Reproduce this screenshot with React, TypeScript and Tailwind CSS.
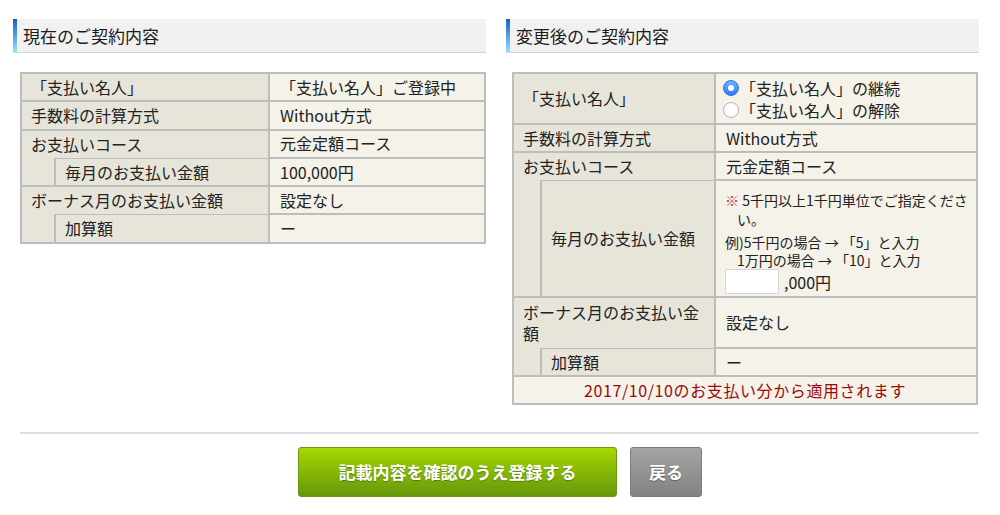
const font = { fontFamily: '"Noto Sans CJK JP", "Noto Sans", sans-serif' }

const th = 'bg-[#e7e4d9] border border-[#bdbdbd] pl-[9px] pr-[6px] flex items-center leading-[21px]'
const td = 'bg-[#f4f2e9] border border-[#bdbdbd] px-[10px] flex items-center leading-[21px]'
const indent = 'bg-[#e7e4d9] border border-[#bdbdbd] border-t-0'

function Heading({ title }: { title: string }) {
  return (
    <div className="flex h-[34px] bg-[#f1f1f1] border-b border-[#d3d3d3]">
      <div className="w-[4px] bg-linear-to-b from-[#1b5cc2] to-[#92e4f9]" />
      <div className="pl-[6px] flex items-center text-[17px] text-[#1a1a1a] font-normal">{title}</div>
    </div>
  )
}

function Radio({ checked, label }: { checked: boolean; label: string }) {
  return (
    <div className="flex items-center h-[22px] leading-[22px]">
      {checked ? (
        <span className="w-[16px] h-[16px] rounded-full bg-linear-to-b from-[#6cb0fb] to-[#2f7df6] border border-[#2a73e0] flex items-center justify-center">
          <span className="w-[6px] h-[6px] rounded-full bg-white" />
        </span>
      ) : (
        <span className="w-[16px] h-[16px] rounded-full bg-white border border-[#b3b3b3]" />
      )}
      <span className="ml-[1px]">{label}</span>
    </div>
  )
}

function CurrentTable() {
  return (
    <div className="ml-[7px] w-[466px] grid grid-cols-[34px_214px_1fr] grid-rows-[repeat(6,28.3px)] border border-[#bdbdbd]">
      <div className={`${th} col-span-2`}>「支払い名人」</div>
      <div className={td}>「支払い名人」ご登録中</div>
      <div className={`${th} col-span-2`}>手数料の計算方式</div>
      <div className={td}>Without方式</div>
      <div className={`${th} col-span-2 border-b-0`}>お支払いコース</div>
      <div className={td}>元金定額コース</div>
      <div className={indent} />
      <div className={th}>毎月のお支払い金額</div>
      <div className={td}>100,000円</div>
      <div className={`${th} col-span-2 border-b-0`}>ボーナス月のお支払い金額</div>
      <div className={td}>設定なし</div>
      <div className={indent} />
      <div className={th}>加算額</div>
      <div className={td}>ー</div>
    </div>
  )
}

function NewTable() {
  return (
    <div className="ml-[6px] w-[466px] grid grid-cols-[28px_174px_1fr] grid-rows-[51px_28px_28px_117px_51px_28px_28px] border border-[#bdbdbd]">
      <div className={`${th} col-span-2`}>「支払い名人」</div>
      <div className="bg-[#f4f2e9] border border-[#bdbdbd] pl-[7px] flex flex-col justify-center">
        <Radio checked label="「支払い名人」の継続" />
        <Radio checked={false} label="「支払い名人」の解除" />
      </div>
      <div className={`${th} col-span-2`}>手数料の計算方式</div>
      <div className={td}>Without方式</div>
      <div className={`${th} col-span-2 border-b-0`}>お支払いコース</div>
      <div className={td}>元金定額コース</div>
      <div className={indent} />
      <div className={th}>毎月のお支払い金額</div>
      <div className="bg-[#f4f2e9] border border-[#bdbdbd] pl-[9px] pr-[4px] pt-[10px] flex flex-col">
        <div className="text-[14px] leading-[19px] pl-[12px] -indent-[12px]">
          <span className="text-[#cc3333]">※</span> 5千円以上1千円単位でご指定ください。
        </div>
        <div className="mt-[4px] text-[14px] leading-[18px]">
          <div>例)5千円の場合 → 「5」と入力</div>
          <div className="pl-[12px]">1万円の場合 → 「10」と入力</div>
        </div>
        <div className="flex items-center">
          <input
            type="text"
            className="w-[54px] h-[25px] bg-white border border-[#d6d6d6] rounded-[2px] outline-none"
          />
          <span className="ml-[5px] text-[16px]">,000円</span>
        </div>
      </div>
      <div className={`${th} col-span-2 border-b-0`}>ボーナス月のお支払い金額</div>
      <div className={td}>設定なし</div>
      <div className={indent} />
      <div className={th}>加算額</div>
      <div className={td}>ー</div>
      <div className="col-span-3 bg-[#f4f2e9] border border-[#bdbdbd] flex items-center justify-center text-[#9b0a0a] tracking-[0.6px]">
        2017/10/10のお支払い分から適用されます
      </div>
    </div>
  )
}

export default function App() {
  return (
    <div className="w-[1000px] h-[515px] bg-white text-[16px] text-[#222]" style={font}>
      <div className="pt-[19px] ml-[13px] w-[966px] grid grid-cols-2 gap-x-[20px] items-start">
        <div>
          <Heading title="現在のご契約内容" />
          <div className="mt-[19px]">
            <CurrentTable />
          </div>
        </div>
        <div>
          <Heading title="変更後のご契約内容" />
          <div className="mt-[19px]">
            <NewTable />
          </div>
        </div>
      </div>
      <div className="mt-[27px] ml-[20px] w-[959px] h-[2px] bg-[#dedede]" />
      <div className="mt-[13px] flex justify-center gap-[13px]">
        <button className="w-[319px] h-[50px] rounded-[3px] bg-linear-to-b from-[#a6d900] to-[#66970b] border border-[#6a9a10] text-white font-bold text-[17px] [text-shadow:0_1px_1px_rgba(0,0,0,0.3)]">
          記載内容を確認のうえ登録する
        </button>
        <button className="w-[72px] h-[50px] rounded-[3px] bg-linear-to-b from-[#a4a4a4] to-[#828282] border border-[#7c7c7c] text-white font-bold text-[17px] [text-shadow:0_1px_1px_rgba(0,0,0,0.3)]">
          戻る
        </button>
      </div>
    </div>
  )
}
